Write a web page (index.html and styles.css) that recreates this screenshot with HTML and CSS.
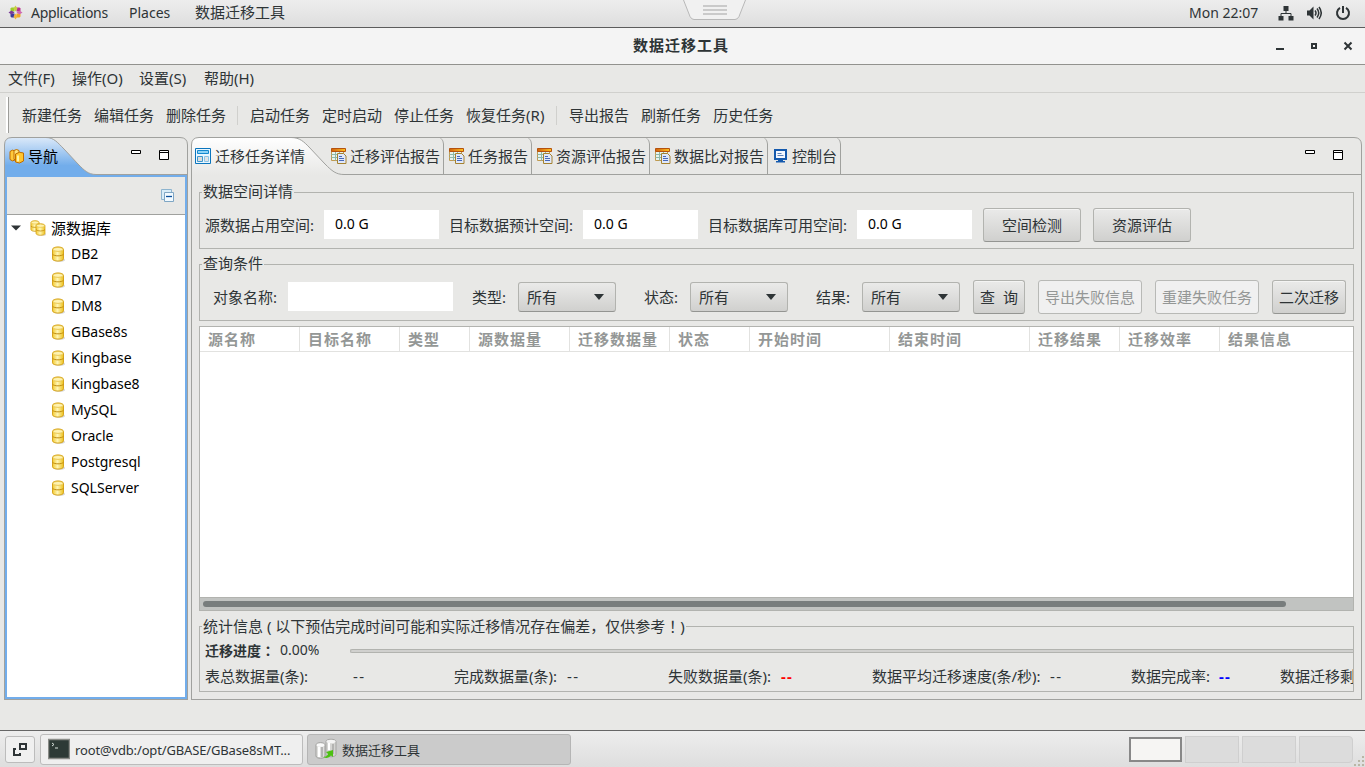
FILE: index.html
```html
<!DOCTYPE html>
<html lang="zh-CN">
<head>
    <meta charset="UTF-8">
    <title>数据迁移工具</title>
    <link rel="stylesheet" href="styles.css">
</head>
<body>

<!-- shared icons -->
<svg class="defs" width="0" height="0">
    <defs>
        <linearGradient id="gold" x1="0" x2="1" y1="0" y2="0">
            <stop offset="0" stop-color="#f3c82c"/>
            <stop offset=".45" stop-color="#fff6b4"/>
            <stop offset="1" stop-color="#ecc01c"/>
        </linearGradient>
        <linearGradient id="blueTab" x1="0" x2="0" y1="0" y2="1">
            <stop offset="0" stop-color="#dbe9f9"/>
            <stop offset=".75" stop-color="#72adeb"/>
        </linearGradient>
        <linearGradient id="whiteTab" x1="0" x2="0" y1="0" y2="1">
            <stop offset="0" stop-color="#ffffff"/>
            <stop offset="1" stop-color="#e8e8e6"/>
        </linearGradient>
        <linearGradient id="head" x1="0" x2="1" y1="0" y2="0">
            <stop offset="0" stop-color="#d0600c"/>
            <stop offset="1" stop-color="#ffc420"/>
        </linearGradient>
        <symbol id="db" viewBox="0 0 16 16">
            <ellipse cx="9.500" cy="14" rx="5.500" ry="1.800" fill="#d8d8d8"/>
            <path d="M2.500 3.500C2.500.1 13.500.1 13.500 3.500v9.300c0 3-11 3-11 0z" fill="url(#gold)" stroke="#d6a41c"/>
            <ellipse cx="8" cy="3.400" rx="5" ry="2" fill="#fff3b0" stroke="#e0b430" stroke-width=".7"/>
            <path d="M2.500 8.200c1.500 2.200 9.500 2.200 11 0" fill="none" stroke="#c08c10" stroke-width="1"/>
        </symbol>
        <symbol id="report" viewBox="0 0 16 16">
            <path d="M.5 3.500h12v9h-12z" fill="#e6f4ef" stroke="#c09a50"/>
            <path d="M.5 6.500h12M.5 9.500h12M4.500 3.500v9M8.500 3.500v9" stroke="#8fb8a8" fill="none"/>
            <path d="M.5.5h14v3H.5z" fill="url(#head)" stroke="#b5520e"/>
            <path d="M6.500 5.500h6l2.500 2.500v7.500h-8.500z" fill="#dfe8fb" stroke="#a58230"/>
            <path d="M8 8.500h3M8 10.500h5M8 12.500h5" stroke="#4668b8" fill="none"/>
        </symbol>
    </defs>
</svg>

<div class="topbar">
    <svg class="logo" width="15" height="15" viewBox="0 0 15 15">
        <g transform="translate(7.500 7.500)">
            <path d="M-1 -1H-5V-4L-4-5H-1z" fill="#9ccd2a"/>
            <path d="M1 -1V-5H4L5-4V-1z" fill="#b8308f"/>
            <path d="M1 1H5V4L4 5H1z" fill="#efa724"/>
            <path d="M-1 1V5H-4L-5 4V1z" fill="#3c3a9c"/>
            <path d="M0-7L2-4 0-1-2-4z" fill="#c8d040"/>
            <path d="M7 0L4 2 1 0 4-2z" fill="#d06ab0"/>
            <path d="M0 7L-2 4 0 1 2 4z" fill="#f0b53a"/>
            <path d="M-7 0L-4-2-1 0-4 2z" fill="#7a3b98"/>
        </g>
    </svg>
    <span class="apps">Applications</span>
    <span class="places">Places</span>
    <span class="app-name">数据迁移工具</span>
    <svg class="handle" width="64" height="21" viewBox="0 0 64 21">
        <path d="M.5 0L7 16.500Q8.500 19.500 11 19.500H52Q54.500 19.500 56 16.500L62.500 0" fill="#f1f1f1" stroke="#b8b8b8"/>
        <path d="M20 6H44M20 10H44M20 14H44" stroke="#cacaca" stroke-width="2"/>
    </svg>
    <span class="clock">Mon 22:07</span>
    <svg class="net" width="16" height="16" viewBox="0 0 16 16" fill="#2e3436">
        <path d="M5.500 1h5v5h-5zM.5 11h5v4.500h-5zM10.500 11h5v4.500h-5z"/>
        <path d="M8 6v2.500M3 11V8.500h10V11" fill="none" stroke="#2e3436"/>
    </svg>
    <svg class="vol" width="16" height="16" viewBox="0 0 16 16">
        <path d="M1 5.500h2.500L7.500 1.500v13L3.500 10.500H1z" fill="#2e3436"/>
        <path d="M9 5.500q2 2.500 0 5M11 3.500q3.500 4.500 0 9M13 2q4.500 6 0 12" fill="none" stroke="#2e3436" stroke-width="1.500"/>
    </svg>
    <svg class="power" width="16" height="16" viewBox="0 0 16 16" fill="none" stroke="#2e3436" stroke-width="2">
        <path d="M5 2.800A6 6 0 1 0 11 2.800M8 1v7"/>
    </svg>
</div>

<div class="titlebar">
    <span class="title">数据迁移工具</span>
    <svg class="win-buttons" width="80" height="12" viewBox="0 0 80 12">
        <path d="M1 9h8" stroke="#2e3436" stroke-width="2"/>
        <path d="M37 4h4v4h-4z" fill="none" stroke="#2e3436" stroke-width="2"/>
        <path d="M69.500 2.500l7 7M76.500 2.500l-7 7" stroke="#2e3436" stroke-width="2"/>
    </svg>
</div>

<div class="menubar">
    <span>文件(F)</span>
    <span>操作(O)</span>
    <span>设置(S)</span>
    <span>帮助(H)</span>
</div>

<div class="toolbar">
    <i class="grab"></i>
    <span>新建任务</span>
    <span>编辑任务</span>
    <span>删除任务</span>
    <i class="sep"></i>
    <span>启动任务</span>
    <span>定时启动</span>
    <span>停止任务</span>
    <span class="resume">恢复任务(R)</span>
    <i class="sep"></i>
    <span>导出报告</span>
    <span>刷新任务</span>
    <span>历史任务</span>
</div>

<div class="workbench">
    <div class="nav">
        <div class="nav-head">
            <svg class="tab-shape" width="184" height="38" viewBox="0 0 184 38">
                <path d="M.5 38V8Q.5.5 8 .5H42C50 .5 54 6 60 12L74 27C80 33 84 37.500 92 37.500V38z" fill="url(#blueTab)"/>
                <path d="M.5 38V8Q.5.5 8 .5H176Q183.500.5 183.500 8V38M42 .5C50 .5 54 6 60 12L74 27C80 33 84 37.500 92 37.500H184" fill="none" stroke="#a0a19e"/>
            </svg>
            <svg class="nav-icon" width="16" height="16" viewBox="0 0 16 16">
                <path d="M1 3.500Q3.500 1 6 3v9Q3.500 14 1 11.500z" fill="#ffc93c" stroke="#c06c00"/>
                <path d="M5 2.500Q7.500.5 10 2.500v9H5z" fill="#ffe27a" stroke="#c06c00"/>
                <path d="M6.500 6Q10.500 3 14.500 5v8Q10.500 16.500 6.500 14z" fill="#ffc62e" stroke="#c06c00"/>
                <path d="M9 7.500v6" stroke="#fff2a8" stroke-width="2"/>
            </svg>
            <span class="nav-title">导航</span>
            <svg class="view-buttons" width="40" height="12" viewBox="0 0 40 12">
                <path d="M.5 1.500h9v3h-9zM28.500 1.500h9v9h-9z" fill="#fff" stroke="#000"/>
                <path d="M28 3.500h10" stroke="#000"/>
            </svg>
        </div>
        <div class="nav-body">
            <div class="nav-tools">
                <svg width="14" height="14" viewBox="0 0 14 14">
                    <path d="M.5.500h10v10H.5z" fill="#d8ecf8" stroke="#8db4cf"/>
                    <path d="M3.500 3.500h9v9h-9z" fill="#f2faff" stroke="#7fa6c4"/>
                    <path d="M5 7.500h6" stroke="#0b4f9c" stroke-width="1.300"/>
                </svg>
            </div>
            <div class="tree">
                <div class="root">
                    <svg class="arrow" width="10" height="6" viewBox="0 0 10 6"><path d="M0 .5h10L5 5.500z" fill="#2e3436"/></svg>
                    <svg width="16" height="16" viewBox="0 0 16 16">
                        <use href="#db" x="-1" y="0" width="12" height="12"/>
                        <use href="#db" x="4" y="3" width="13" height="13"/>
                    </svg>
                    <span>源数据库</span>
                </div>
                <div class="leaf"><svg width="16" height="16"><use href="#db"/></svg>DB2</div>
                <div class="leaf"><svg width="16" height="16"><use href="#db"/></svg>DM7</div>
                <div class="leaf"><svg width="16" height="16"><use href="#db"/></svg>DM8</div>
                <div class="leaf"><svg width="16" height="16"><use href="#db"/></svg>GBase8s</div>
                <div class="leaf"><svg width="16" height="16"><use href="#db"/></svg>Kingbase</div>
                <div class="leaf"><svg width="16" height="16"><use href="#db"/></svg>Kingbase8</div>
                <div class="leaf"><svg width="16" height="16"><use href="#db"/></svg>MySQL</div>
                <div class="leaf"><svg width="16" height="16"><use href="#db"/></svg>Oracle</div>
                <div class="leaf"><svg width="16" height="16"><use href="#db"/></svg>Postgresql</div>
                <div class="leaf"><svg width="16" height="16"><use href="#db"/></svg>SQLServer</div>
            </div>
        </div>
    </div>

    <div class="main">
        <div class="tabs">
            <svg class="tab-shape" width="1171" height="38" viewBox="0 0 1171 38">
                <path d="M.5 38V8Q.5.5 8 .5H100C109 .5 113 5 118 10L134 27C141 34 145 37.500 153 37.500V38z" fill="url(#whiteTab)"/>
                <path d="M.5 38V8Q.5.5 8 .5H1163Q1170.500.5 1170.500 8V38M100 .5C109 .5 113 5 118 10L134 27C141 34 145 37.500 153 37.500H1171" fill="none" stroke="#a0a19e"/>
            </svg>
            <div class="tab active">
                <svg width="16" height="16" viewBox="0 0 16 16">
                    <path d="M.5.500h15v15H.5z" fill="#eaf7ff" stroke="#0b75bd"/>
                    <path d="M2.500 2.500h11v3h-11z" fill="#8fd3f5" stroke="#1689cf"/>
                    <path d="M2.500 8.500h5v5h-5z" fill="#dcdcdc" stroke="#3f97cc"/>
                    <path d="M9.500 8.500h4v5h-4z" fill="#e4e4e4" stroke="#8fc4e4"/>
                </svg>
                <span>迁移任务详情</span>
            </div>
            <div class="tab"><svg width="16" height="16"><use href="#report"/></svg><span>迁移评估报告</span></div>
            <div class="tab"><svg width="16" height="16"><use href="#report"/></svg><span>任务报告</span></div>
            <div class="tab"><svg width="16" height="16"><use href="#report"/></svg><span>资源评估报告</span></div>
            <div class="tab"><svg width="16" height="16"><use href="#report"/></svg><span>数据比对报告</span></div>
            <div class="tab console">
                <svg width="15" height="16" viewBox="0 0 15 16">
                    <path d="M1 2h11v9H1z" fill="#f4f8ff" stroke="#1459ad" stroke-width="2"/>
                    <path d="M3.500 5.500h4M3.500 7.500h6" stroke="#5b81b8"/>
                    <path d="M4 12h5v1h2v1.500H2V13h2z" fill="#1459ad"/>
                </svg>
                <span>控制台</span>
            </div>
            <svg class="view-buttons" width="40" height="12" viewBox="0 0 40 12">
                <path d="M.5 1.500h9v3h-9zM28.500 1.500h9v9h-9z" fill="#fff" stroke="#000"/>
                <path d="M28 3.500h10" stroke="#000"/>
            </svg>
        </div>

        <div class="content">
            <fieldset class="space">
                <legend>数据空间详情</legend>
                <div class="row">
                    <label>源数据占用空间:</label>
                    <div class="field">0.0 G</div>
                    <label>目标数据预计空间:</label>
                    <div class="field">0.0 G</div>
                    <label>目标数据库可用空间:</label>
                    <div class="field">0.0 G</div>
                    <button class="wide">空间检测</button>
                    <button class="wide">资源评估</button>
                </div>
            </fieldset>

            <fieldset class="query">
                <legend>查询条件</legend>
                <div class="row">
                    <label>对象名称:</label>
                    <div class="field name"></div>
                    <label>类型:</label>
                    <div class="select">所有<i></i></div>
                    <label>状态:</label>
                    <div class="select">所有<i></i></div>
                    <label>结果:</label>
                    <div class="select">所有<i></i></div>
                    <button class="search">查&nbsp; 询</button>
                    <button class="export" disabled>导出失败信息</button>
                    <button class="export" disabled>重建失败任务</button>
                    <button class="again">二次迁移</button>
                </div>
            </fieldset>

            <div class="table">
                <div class="thead">
                    <span>源名称</span>
                    <span>目标名称</span>
                    <span>类型</span>
                    <span>源数据量</span>
                    <span>迁移数据量</span>
                    <span>状态</span>
                    <span>开始时间</span>
                    <span>结束时间</span>
                    <span>迁移结果</span>
                    <span>迁移效率</span>
                    <span>结果信息</span>
                </div>
                <div class="tbody"></div>
                <div class="scroll"><i></i></div>
            </div>

            <fieldset class="stats">
                <legend>统计信息 ( 以下预估完成时间可能和实际迁移情况存在偏差，仅供参考<span class="punct" lang="ja">！</span>)</legend>
                <div class="progress">
                    <b>迁移进度<span class="punct" lang="ja">：</span></b>
                    <span class="percent">0.00%</span>
                    <i></i>
                </div>
                <div class="counts">
                    <span>表总数据量(条):</span><span class="value">--</span>
                    <span>完成数据量(条):</span><span class="value">--</span>
                    <span>失败数据量(条):</span><span class="value red">--</span>
                    <span>数据平均迁移速度(条/秒):</span><span class="value">--</span>
                    <span>数据完成率:</span><span class="value blue">--</span>
                    <span>数据迁移剩</span>
                </div>
            </fieldset>
        </div>
    </div>
</div>

<div class="taskbar">
    <div class="show-desktop">
        <svg width="16" height="16" viewBox="0 0 16 16" fill="none" stroke="#2e3436" stroke-width="2">
            <path d="M8 2h6v5H8zM4 7H2v6h6v-2"/>
        </svg>
    </div>
    <div class="task">
        <svg width="22" height="22" viewBox="0 0 22 22">
            <path d="M.5 1.500h21v19H.5z" fill="#2d3a36" stroke="#8a8c88" stroke-width="1.500"/>
            <path d="M4 5l2 1.500L4 8M7 10h3" fill="none" stroke="#d8e0dc"/>
        </svg>
        <span class="term">root@vdb:/opt/GBASE/GBase8sMT...</span>
    </div>
    <div class="task current">
        <svg width="22" height="22" viewBox="0 0 22 22">
            <path d="M11 3.500c0-3 10-3 10 0v13c0 3-10 3-10 0z" fill="#d4d4d2" stroke="#a5a5a3"/>
            <path d="M1 7c0-3 9-3 9 0v11c0 3-9 3-9 0z" fill="#dededc" stroke="#9d9d9b"/>
            <ellipse cx="16" cy="3.500" rx="4.500" ry="1.800" fill="#f4f4f4"/>
            <ellipse cx="5.500" cy="7" rx="4" ry="1.800" fill="#fafafa"/>
            <path d="M4 9v10M14 5v7" stroke="#fff" stroke-width="2"/>
            <path d="M7 9v10M18 6v10" stroke="#a8a8a6" stroke-width="1.500"/>
            <path d="M8 19q4 0 5-3l-2-2 7-2v7l-2-1.500q-3 4-8 1.500z" fill="#4cc012"/>
        </svg>
        <span>数据迁移工具</span>
    </div>
    <div class="workspaces">
        <i class="on"></i><i></i><i></i><i></i>
    </div>
    <svg class="grip" width="12" height="12" viewBox="0 0 12 12" fill="#b9b6a5">
        <path d="M9 1h2v2H9zM5 5h2v2H5zM9 5h2v2H9zM1 9h2v2H1zM5 9h2v2H5zM9 9h2v2H9z"/>
    </svg>
</div>

</body>
</html>
```
FILE: styles.css
```css
* {
    box-sizing: border-box;
}

body {
    margin: 0;
    width: 1365px;
    height: 767px;
    overflow: hidden;
    display: flex;
    flex-direction: column;
    background-color: #e8e8e6;
    color: #2e3436;
    font-family: "Noto Sans", "Noto Sans CJK SC", sans-serif;
    font-size: 15px;
    line-height: 22px;
    white-space: nowrap;
}

svg {
    display: block;
    flex: none;
}

.defs {
    position: absolute;
}

/* colon and exclamation mark sit in the middle of their cell */
.punct {
    font-family: "Noto Sans CJK JP", sans-serif;
}

/* desktop top bar */
.topbar {
    position: relative;
    height: 28px;
    flex: none;
    display: flex;
    align-items: center;
    padding: 0 14px 2px 8px;
    background: linear-gradient(#ededed, #dedede);
    border-bottom: 1px solid #5c5c5c;
}

.apps, .places, .clock {
    font-size: 14px;
}

.apps {
    width: 98px;
    margin-left: 8px;
    letter-spacing: -0.3px;
}

.places {
    width: 66px;
}

.app-name {
    padding-bottom: 1px;
}

.clock {
    margin-left: auto;
    width: 89px;
}

.handle {
    position: absolute;
    left: 683px;
    top: 0;
}

.vol {
    margin: 0 13px 0 12px;
}

.titlebar {
    height: 37px;
    flex: none;
    display: flex;
    align-items: center;
    background-color: #f4f4f4;
    border-bottom: 1px solid #92928e;
    padding-right: 10px;
}

.title {
    margin-left: 633px;
    padding-bottom: 2px;
    font-weight: bold;
    letter-spacing: 1px;
}

.win-buttons {
    margin-left: auto;
}

.menubar {
    height: 28px;
    flex: none;
    display: grid;
    grid-template-columns: 64px 67px 65px 60px;
    align-items: center;
    padding: 0 0 1px 8px;
    border-bottom: 1px solid #d0d0cd;
}

.toolbar {
    height: 44px;
    flex: none;
    display: flex;
    align-items: center;
    gap: 12px;
    padding-left: 6px;
}

.toolbar span {
    padding-bottom: 1px;
}

.grab {
    width: 3px;
    height: 36px;
    margin-right: 1px;
    background-color: #fff;
    border-right: 1px solid #9c9c99;
}

.sep {
    width: 1px;
    height: 19px;
    margin-left: -1px;
    background-color: #d0d0cd;
}

.resume {
    width: 79px;
}

.workbench {
    height: 563px;
    flex: none;
    display: flex;
    gap: 3px;
    padding-left: 4px;
}

/* navigation view */
.nav {
    width: 184px;
    display: flex;
    flex-direction: column;
}

.nav-head {
    position: relative;
    height: 38px;
    display: flex;
    align-items: center;
    padding-left: 5px;
}

.tab-shape {
    position: absolute;
    left: 0;
    top: 0;
}

.nav-icon, .nav-title, .tab, .view-buttons {
    position: relative;
}

.nav-title {
    margin-left: 3px;
    color: #000;
}

.nav-head .view-buttons {
    margin-left: auto;
    margin-right: 17px;
    margin-bottom: 2px;
}

.nav-body {
    flex: 1;
    display: flex;
    flex-direction: column;
    border: 1px solid #a0a19e;
    border-top: none;
    box-shadow: inset 0 0 0 2px #72adeb;
    padding: 2px;
}

.nav-tools {
    height: 38px;
    display: flex;
    align-items: center;
    justify-content: flex-end;
    padding-right: 10px;
    border-bottom: 1px solid #a0a19e;
}

.tree {
    flex: 1;
    background-color: #fff;
    color: #000;
}

.root, .leaf {
    height: 26px;
    display: flex;
    align-items: center;
}

.root {
    padding-left: 4px;
}

.root svg {
    margin-right: 5px;
}

.root .arrow {
    margin-right: 9px;
}

.leaf {
    padding-left: 43px;
    gap: 5px;
    font-size: 14px;
}

/* editor area */
.main {
    width: 1171px;
    display: flex;
    flex-direction: column;
}

.tabs {
    position: relative;
    height: 38px;
    flex: none;
    display: flex;
}

.tab {
    height: 37px;
    display: flex;
    align-items: center;
    gap: 3px;
    padding: 0 3px 0 5px;
    border-right: 1px solid #a0a19e;
    border-top-right-radius: 7px;
}

.tab.active {
    width: 135px;
    gap: 4px;
    padding-left: 4px;
    border: none;
}

.tab.console {
    padding-left: 6px;
}

.tabs .view-buttons {
    margin: 12px 17px 0 auto;
}

.content {
    flex: 1;
    padding: 6px 7px 7px;
    border: 1px solid #a0a19e;
    border-top: none;
}

fieldset {
    margin: 0;
    padding: 0;
    border: 1px solid #b2b3af;
    min-width: 0;
}

legend {
    height: 22px;
    margin-left: 2px;
    padding: 0 1px;
    line-height: 21px;
}

.space, .query {
    height: 68px;
}

.query {
    margin-top: 4px;
}

.row {
    display: flex;
    align-items: center;
    height: 34px;
    margin-top: 5px;
}

.row label {
    padding-bottom: 1px;
}

.space label {
    margin: 0 10px;
}

.space label:first-child {
    margin-left: 5px;
}

.field {
    width: 115px;
    height: 29px;
    margin-bottom: 1px;
    padding: 3px 11px;
    background-color: #fff;
    color: #000;
    font-size: 14px;
}

button {
    height: 34px;
    padding: 0 0 1px;
    font: inherit;
    color: #2e3436;
    background: linear-gradient(#eaeae9, #d0d0ce);
    border: 1px solid #b2b3af;
    border-bottom-color: #949592;
    border-radius: 3px;
    box-shadow: inset 0 1px #f4f4f3;
}

button:disabled {
    color: #949796;
    background: #f0f0f0;
    border-color: #b8b9b6;
    box-shadow: none;
}

.wide {
    width: 98px;
    margin-left: 11px;
}

.wide + .wide {
    margin-left: 12px;
}

.query label {
    width: 46px;
    margin-left: 28px;
}

.query label:first-child {
    width: 75px;
    margin-left: 13px;
}

.field.name {
    width: 165px;
}

.query .field + label {
    margin-left: 19px;
}

.select {
    width: 98px;
    height: 30px;
    display: flex;
    align-items: center;
    justify-content: space-between;
    padding: 0 11px 0 8px;
    background: linear-gradient(#eaeae9, #d0d0ce);
    border: 1px solid #b2b3af;
    border-bottom-color: #949592;
    border-radius: 3px;
}

.select i {
    border: 5px solid transparent;
    border-top: 6px solid #2e3436;
    border-bottom: none;
}

.query button {
    margin-left: 13px;
}

.search {
    width: 52px;
}

.export {
    width: 104px;
}

.again {
    width: 74px;
}

/* result table */
.table {
    height: 285px;
    margin-top: 5px;
    display: flex;
    flex-direction: column;
    border: 1px solid #b2b3af;
    background-color: #fff;
}

.thead {
    height: 25px;
    display: grid;
    grid-template-columns: 100px 100px 70px 100px 100px 80px 140px 140px 90px 100px 1fr;
    border-bottom: 1px solid #e2e2e0;
    color: #949796;
    font-weight: bold;
    letter-spacing: 1px;
}

.thead span {
    padding-left: 8px;
    line-height: 24px;
    border-right: 1px solid #e2e2e0;
}

.thead span:last-child {
    border: none;
}

.tbody {
    flex: 1;
}

.scroll {
    height: 13px;
    padding: 3px;
    background-color: #c1c3c1;
    border-top: 1px solid #b2b3af;
}

.scroll i {
    display: block;
    width: 1083px;
    height: 6px;
    border-radius: 3px;
    background-color: #787d7d;
}

.stats {
    height: 77px;
    margin-top: 4px;
    overflow: hidden;
}

.progress {
    display: flex;
    align-items: center;
    height: 26px;
    padding-left: 5px;
    font-size: 14px;
}

.progress b {
    width: 75px;
}

.percent {
    width: 70px;
}

.progress i {
    flex: 1;
    height: 4px;
    margin-top: 1px;
    background-color: #d0d0ce;
    border: 1px solid #b2b3af;
    border-right: none;
    border-radius: 2px 0 0 2px;
}

.counts {
    display: grid;
    grid-template-columns: 148px 101px 113px 101px 113px 91px 178px 81px 88px 61px 75px;
    padding-left: 5px;
    line-height: 26px;
}

.value {
    letter-spacing: 1.3px;
}

.red, .blue {
    font-weight: bold;
}

.red {
    color: #ff0000;
}

.blue {
    color: #0000ff;
}

/* bottom panel */
.taskbar {
    height: 37px;
    margin-top: auto;
    flex: none;
    display: flex;
    align-items: center;
    padding-left: 5px;
    background: linear-gradient(#ededed, #dedede);
    border-top: 1px solid #666;
    font-size: 13px;
}

.show-desktop {
    width: 30px;
    height: 27px;
    padding: 5px 6px;
    margin-right: 5px;
    border: 1px solid #bcbcbc;
    border-radius: 3px;
    background-color: #f0f0f0;
}

.task {
    width: 263px;
    height: 31px;
    display: flex;
    align-items: center;
    gap: 5px;
    padding-left: 7px;
    border: 1px solid #bcbcbc;
    border-radius: 3px;
    background-color: #efefef;
}

.task span {
    padding-top: 1px;
}

.term {
    letter-spacing: -0.15px;
}

.task.current {
    width: 264px;
    margin-left: 4px;
    background-color: #cbcbcb;
    border-color: #b5b5b5;
}

.workspaces {
    margin-left: auto;
    display: flex;
    gap: 3px;
}

.workspaces i {
    width: 54px;
    height: 27px;
    border: 1px solid #cfcfcf;
    background-color: #dcdcdc;
}

.workspaces .on {
    border: 2px solid #888;
    background-color: #f6f5f3;
    height: 25px;
    width: 53px;
    margin-top: 1px;
}

.workspaces i:last-child {
    border-radius: 0 4px 4px 0;
}

.grip {
    align-self: flex-end;
}
```
